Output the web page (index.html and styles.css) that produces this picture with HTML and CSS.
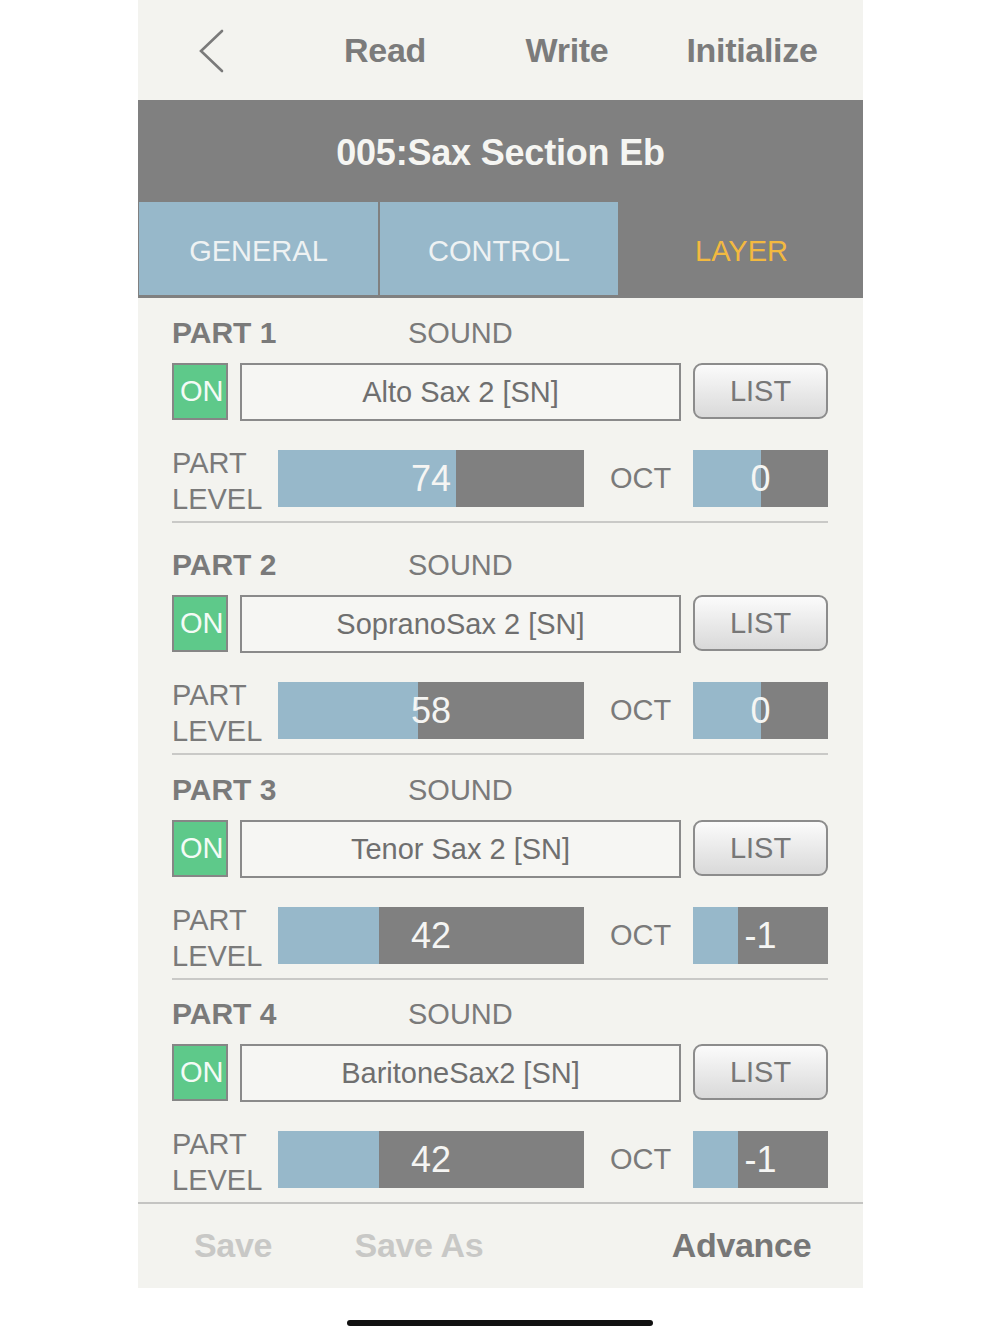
FILE: index.html
```html
<!DOCTYPE html>
<html lang="en">
<head>
<meta charset="utf-8">
<title>Layer</title>
<link rel="stylesheet" href="styles.css">
</head>
<body>
<div class="app">
  <header class="nav">
    <div class="nav-cell back">
      <svg class="chev" width="30" height="46" viewBox="0 0 30 46" aria-hidden="true">
        <path d="M25 3 L4 23 L25 43" fill="none" stroke="#7a7a7a" stroke-width="2.6" stroke-linecap="round" stroke-linejoin="miter"/>
      </svg>
    </div>
    <div class="nav-cell read">Read</div>
    <div class="nav-cell write">Write</div>
    <div class="nav-cell init">Initialize</div>
  </header>

  <div class="title">005:Sax Section Eb</div>

  <nav class="tabs">
    <div class="tab tab-off">GENERAL</div>
    <div class="tab tab-off">CONTROL</div>
    <div class="tab tab-on">LAYER</div>
  </nav>

  <main class="parts">
    <section class="part part-1">
      <div class="part-head"><span class="part-name">PART 1</span><span class="part-sound">SOUND</span></div>
      <div class="row-sound">
        <div class="on">ON</div>
        <div class="sound-box">Alto Sax 2 [SN]</div>
        <div class="list-btn">LIST</div>
      </div>
      <div class="row-level">
        <div class="level-label">PART<br>LEVEL</div>
        <div class="bar"><div class="fill" style="width:58.27%"></div><div class="val">74</div></div>
        <div class="oct-label">OCT</div>
        <div class="bar"><div class="fill" style="width:50%"></div><div class="val">0</div></div>
      </div>
    </section>

    <section class="part part-2">
      <div class="part-head"><span class="part-name">PART 2</span><span class="part-sound">SOUND</span></div>
      <div class="row-sound">
        <div class="on">ON</div>
        <div class="sound-box">SopranoSax 2 [SN]</div>
        <div class="list-btn">LIST</div>
      </div>
      <div class="row-level">
        <div class="level-label">PART<br>LEVEL</div>
        <div class="bar"><div class="fill" style="width:45.67%"></div><div class="val">58</div></div>
        <div class="oct-label">OCT</div>
        <div class="bar"><div class="fill" style="width:50%"></div><div class="val">0</div></div>
      </div>
    </section>

    <section class="part part-3">
      <div class="part-head"><span class="part-name">PART 3</span><span class="part-sound">SOUND</span></div>
      <div class="row-sound">
        <div class="on">ON</div>
        <div class="sound-box">Tenor Sax 2 [SN]</div>
        <div class="list-btn">LIST</div>
      </div>
      <div class="row-level">
        <div class="level-label">PART<br>LEVEL</div>
        <div class="bar"><div class="fill" style="width:33.07%"></div><div class="val">42</div></div>
        <div class="oct-label">OCT</div>
        <div class="bar"><div class="fill" style="width:33.33%"></div><div class="val">-1</div></div>
      </div>
    </section>

    <section class="part part-4">
      <div class="part-head"><span class="part-name">PART 4</span><span class="part-sound">SOUND</span></div>
      <div class="row-sound">
        <div class="on">ON</div>
        <div class="sound-box">BaritoneSax2 [SN]</div>
        <div class="list-btn">LIST</div>
      </div>
      <div class="row-level">
        <div class="level-label">PART<br>LEVEL</div>
        <div class="bar"><div class="fill" style="width:33.07%"></div><div class="val">42</div></div>
        <div class="oct-label">OCT</div>
        <div class="bar"><div class="fill" style="width:33.33%"></div><div class="val">-1</div></div>
      </div>
    </section>
  </main>

  <footer class="bottom">
    <div class="bt bt-dim">Save</div>
    <div class="bt bt-dim">Save As</div>
    <div class="bt-spacer"></div>
    <div class="bt bt-on">Advance</div>
  </footer>
</div>
<div class="home"></div>
</body>
</html>
```

FILE: styles.css
```css
html, body {
  margin: 0;
  padding: 0;
  background: #ffffff;
}

body {
  font-family: "Liberation Sans", Arial, Helvetica, sans-serif;
  color: #787878;
}

.app {
  width: 725px;
  margin-left: calc(50% - 362px);
  background: #f3f3ef;
  display: flex;
  flex-direction: column;
}

/* top nav */
.nav {
  height: 100px;
  display: grid;
  grid-template-columns: 152px 190px 174px 196px 1fr;
  align-items: center;
}

.nav-cell {
  font-size: 34px;
  font-weight: bold;
  color: #7b7b7b;
  text-align: center;
  letter-spacing: -0.3px;
}

.back {
  display: flex;
  padding-left: 59px;
  padding-top: 2px;
}

/* title */
.title {
  height: 100px;
  box-sizing: border-box;
  padding-top: 5px;
  background: #808080;
  color: #f5f5f2;
  font-size: 36px;
  font-weight: bold;
  display: flex;
  align-items: center;
  justify-content: center;
  letter-spacing: -0.2px;
}

/* tabs */
.tabs {
  height: 98px;
  box-sizing: border-box;
  background: #808080;
  padding: 2px 0 3px 1px;
  display: grid;
  grid-template-columns: 239px 238px 1fr;
  column-gap: 2px;
}

.tab {
  display: flex;
  align-items: center;
  justify-content: center;
  font-size: 29px;
  padding-top: 5px;
}

.tab-off {
  background: #97b8ca;
  color: #eef2f3;
}

.tab-on {
  color: #f2b940;
}

/* parts */
.parts {
  height: 904px;
  overflow: hidden;
  box-sizing: border-box;
  padding: 17px 35px 0 34px;
}

.part {
  border-bottom: 2px solid #c9c9c7;
  padding-bottom: 14px;
  margin-bottom: 20px;
}

.part-1 { margin-bottom: 24px; }
.part-2 { margin-bottom: 17px; }
.part-3 { margin-bottom: 16px; }

.part-head {
  display: flex;
  height: 36px;
  align-items: center;
}

.part-name {
  width: 236px;
  font-size: 30px;
  font-weight: bold;
  color: #7a7a7a;
}

.part-sound {
  font-size: 29px;
  color: #7a7a7a;
}

.row-sound {
  margin-top: 12px;
  height: 58px;
  display: grid;
  grid-template-columns: 56px 1fr 135px;
  grid-template-rows: 58px;
  column-gap: 12px;
  align-items: start;
}

.on {
  box-sizing: border-box;
  height: 57px;
  border: 2px solid #868686;
  background: #5ec98a;
  color: #f4fbf6;
  font-size: 29px;
  display: flex;
  align-items: center;
  padding-left: 6px;
}

.sound-box {
  box-sizing: border-box;
  border: 2px solid #8a8a8a;
  background: #f6f6f3;
  color: #6f6f6f;
  font-size: 29px;
  display: flex;
  align-items: center;
  justify-content: center;
  height: 58px;
}

.list-btn {
  box-sizing: border-box;
  border: 2px solid #8c8c8c;
  border-radius: 9px;
  background: linear-gradient(#fbfbfb, #d9d9d9);
  color: #777777;
  font-size: 29px;
  display: flex;
  align-items: center;
  justify-content: center;
  height: 56px;
}

.row-level {
  margin-top: 29px;
  height: 57px;
  display: grid;
  grid-template-columns: 106px 306px 1fr 135px;
  grid-template-rows: 57px;
  align-items: center;
}

.level-label {
  align-self: start;
  margin-top: -5px;
  font-size: 29px;
  line-height: 36px;
  color: #7a7a7a;
}

.oct-label {
  font-size: 29px;
  color: #7a7a7a;
  text-align: center;
  padding-left: 4px;
}

.bar {
  height: 57px;
  background: #808080;
  display: grid;
}

.fill {
  grid-area: 1 / 1;
  background: #97b8ca;
  justify-self: start;
  height: 100%;
}

.val {
  grid-area: 1 / 1;
  display: flex;
  align-items: center;
  justify-content: center;
  color: #f5f5f3;
  font-size: 36px;
}

/* bottom bar */
.bottom {
  border-top: 2px solid #c4c4c2;
  height: 84px;
  display: grid;
  grid-template-columns: 190px 182px 1fr 243px;
  align-items: center;
}

.bt {
  font-size: 34px;
  font-weight: bold;
  text-align: center;
  letter-spacing: -0.3px;
  padding-bottom: 2px;
}

.bt-dim {
  color: #c8c8c6;
}

.bt-on {
  color: #777777;
}

.home {
  width: 306px;
  height: 6px;
  border-radius: 3px;
  background: #111111;
  margin: 32px auto 0;
}
```
